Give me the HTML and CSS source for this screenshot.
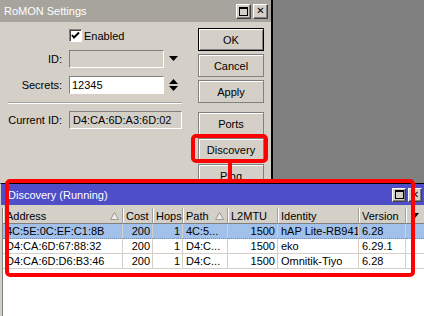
FILE: index.html
```html
<!doctype html>
<html lang="en">
<head>
    <meta charset="UTF-8">
    <title>RoMON Settings</title>
    <link rel="stylesheet" href="styles.css">
</head>
<body>
<div class="screen">
    <div class="top">
        <div class="settings">
            <div class="titlebar inactive">
                <span class="title">RoMON Settings</span>
                <span class="tbtns">
                    <span class="tbtn"><span class="maxi"></span></span>
                    <span class="tbtn close">&#x2715;</span>
                </span>
            </div>
            <div class="sbody">
                <div class="form">
                    <div class="row check-row">
                        <span class="checkbox">
                            <svg width="11" height="11" viewBox="0 0 11 11"><path d="M2 5 L4 7.5 L9 2.5" fill="none" stroke="#000" stroke-width="2"/></svg>
                        </span>
                        <span class="check-label">Enabled</span>
                    </div>
                    <div class="row">
                        <span class="label">ID:</span>
                        <span class="field disabled"></span>
                        <svg class="arrow" width="9" height="6" viewBox="0 0 9 6"><polygon points="0,0 9,0 4.5,5" fill="#000"/></svg>
                    </div>
                    <div class="row">
                        <span class="label">Secrets:</span>
                        <span class="field white">12345</span>
                        <svg class="arrow" width="9" height="12" viewBox="0 0 9 12"><polygon points="4.5,0 9,5 0,5" fill="#000"/><polygon points="0,7 9,7 4.5,12" fill="#000"/></svg>
                    </div>
                    <div class="sep"></div>
                    <div class="row">
                        <span class="label">Current ID:</span>
                        <span class="field disabled wide">D4:CA:6D:A3:6D:02</span>
                    </div>
                </div>
                <div class="buttons">
                    <div class="btn default">OK</div>
                    <div class="btn">Cancel</div>
                    <div class="btn">Apply</div>
                    <div class="btn gap">Ports</div>
                    <div class="btn">Discovery</div>
                    <div class="btn">Ping</div>
                </div>
            </div>
        </div>
        <div class="desktop"></div>
    </div>

    <div class="discovery">
        <div class="titlebar active">
            <span class="title">Discovery (Running)</span>
            <span class="tbtns">
                <span class="tbtn small"><span class="maxi"></span></span>
                <span class="tbtn small close">&#x2715;</span>
            </span>
        </div>
        <div class="dbody">
            <div class="table">
                <div class="th">Address <svg class="sort" width="9" height="8" viewBox="0 0 9 8"><polygon points="4.5,0.5 8.5,7.5 0.5,7.5" fill="#ecebe6" stroke="#9a9a9a"/></svg></div>
                <div class="th">Cost</div>
                <div class="th">Hops</div>
                <div class="th">Path <svg class="sort" width="9" height="8" viewBox="0 0 9 8"><polygon points="4.5,0.5 8.5,7.5 0.5,7.5" fill="#ecebe6" stroke="#9a9a9a"/></svg></div>
                <div class="th">L2MTU</div>
                <div class="th">Identity</div>
                <div class="th">Version</div>
                <div class="th last"><svg width="8" height="5" viewBox="0 0 8 5"><polygon points="0,0 8,0 4,5" fill="#000"/></svg></div>

                <div class="td sel">4C:5E:0C:EF:C1:8B</div>
                <div class="td sel num">200</div>
                <div class="td sel num">1</div>
                <div class="td sel">4C:5...</div>
                <div class="td sel num">1500</div>
                <div class="td sel">hAP Lite-RB941</div>
                <div class="td sel">6.28</div>
                <div class="td sel end"></div>

                <div class="td">D4:CA:6D:67:88:32</div>
                <div class="td num">200</div>
                <div class="td num">1</div>
                <div class="td">D4:C...</div>
                <div class="td num">1500</div>
                <div class="td">eko</div>
                <div class="td">6.29.1</div>
                <div class="td end"></div>

                <div class="td">D4:CA:6D:D6:B3:46</div>
                <div class="td num">200</div>
                <div class="td num">1</div>
                <div class="td">D4:C...</div>
                <div class="td num">1500</div>
                <div class="td">Omnitik-Tiyo</div>
                <div class="td">6.28</div>
                <div class="td end"></div>
            </div>
        </div>
    </div>

    <!-- red annotation marks -->
    <div class="mark mark-btn"></div>
    <div class="mark-line"></div>
    <div class="mark mark-table"></div>
</div>
</body>
</html>
```

FILE: styles.css
```css
*{
    margin: 0;
    padding: 0;
    box-sizing: border-box;
}
body{
    font-family: "Liberation Sans", Arial, sans-serif;
    font-size: 11px;
    color: #000;
    background: #808080;
}
.screen{
    position: relative;
    width: 424px;
    height: 316px;
    overflow: hidden;
}
.top{
    display: flex;
    height: 183px;
    overflow: hidden;
}
.settings{
    width: 273px;
    height: 200px;
    background: #d4d0c8;
    border-right: 2px solid #000;
}
.desktop{
    flex: 1;
    background: #808080;
}
.titlebar{
    display: flex;
    align-items: center;
    color: #fff;
}
.titlebar.inactive{
    height: 22px;
    background: #a6a49c;
    padding-left: 4px;
}
.titlebar .title{
    flex: 1;
}
.tbtns{
    display: flex;
    gap: 2px;
    padding-right: 3px;
}
.tbtn{
    width: 15px;
    height: 15px;
    background: #d4d0c8;
    border: 1px solid;
    border-color: #fff #404040 #404040 #fff;
    box-shadow: inset -1px -1px #808080;
    display: flex;
    align-items: center;
    justify-content: center;
    color: #000;
}
.tbtn.small{
    width: 14px;
    height: 14px;
}
.maxi{
    width: 9px;
    height: 9px;
    border: 1px solid #000;
    border-top-width: 2px;
}
.close{
    font-size: 10px;
    font-weight: bold;
    line-height: 1;
    font-family: "DejaVu Sans", sans-serif;
}
.sbody{
    display: flex;
    padding-left: 8px;
}
.form{
    width: 174px;
    padding-top: 7px;
}
.row{
    display: flex;
    align-items: center;
    height: 18px;
    margin-bottom: 8px;
}
.check-row{
    height: 13px;
    margin-bottom: 8px;
    padding-left: 61px;
}
.checkbox{
    width: 13px;
    height: 13px;
    background: #fff;
    border: 1px solid;
    border-color: #808080 #fff #fff #808080;
    box-shadow: inset 1px 1px #404040;
    display: flex;
    align-items: center;
    justify-content: center;
}
.check-label{
    margin-left: 2px;
}
.label{
    width: 54px;
    text-align: right;
    margin-right: 7px;
    white-space: nowrap;
}
.field{
    width: 95px;
    height: 18px;
    border: 1px solid;
    border-color: #808080 #fff #fff #808080;
    padding-left: 2px;
    line-height: 16px;
}
.field.white{
    background: #fff;
}
.field.disabled{
    background: #d4d0c8;
}
.field.wide{
    width: 113px;
    padding-left: 3px;
}
.arrow{
    margin-left: 5px;
}
.sep{
    height: 2px;
    border-top: 1px solid #a0a0a0;
    border-bottom: 1px solid #fff;
    margin-bottom: 7px;
}
.buttons{
    margin-left: 16px;
    padding-top: 6px;
    display: flex;
    flex-direction: column;
    gap: 3px;
}
.btn{
    width: 66px;
    height: 23px;
    border: 1px solid #808080;
    box-shadow: inset 1px 1px #fff;
    display: flex;
    align-items: center;
    justify-content: center;
}
.btn.default{
    border-color: #000;
    box-shadow: inset 1px 1px #fff, inset -1px -1px #808080;
}
.btn.gap{
    margin-top: 6px;
}
.discovery{
    height: 133px;
    background: #d4d0c8;
    border-top: 1px solid #000;
    border-left: 1px solid #d4d0c8;
}
.titlebar.active{
    height: 21px;
    background: #4e4ec8;
    padding-left: 7px;
}
.titlebar.active .tbtns{
    padding-right: 2px;
}
.dbody{
    padding: 3px 0 0 1px;
    height: 112px;
}
.table{
    height: 100%;
    background: #fff;
    border-left: 1px solid #808080;
    display: grid;
    grid-template-columns: 120px 30px 30px 45px 50px 81px 47px 1fr;
    grid-auto-rows: 15px;
    grid-template-rows: 16px;
    align-content: start;
}
.th{
    background: #d4d0c8;
    border-right: 1px solid #a0a0a0;
    border-bottom: 1px solid #808080;
    box-shadow: inset 1px 0 #fff;
    padding: 0 3px;
    display: flex;
    align-items: center;
    white-space: nowrap;
}
.th .sort{
    margin-left: auto;
}
.th.last{
    border-right: none;
    justify-content: center;
}
.td{
    border-right: 1px solid #d4d0c8;
    border-bottom: 1px solid #d4d0c8;
    padding: 0 3px;
    line-height: 14px;
    white-space: nowrap;
    overflow: hidden;
}
.td.num{
    text-align: right;
    padding-right: 2px;
}
.td.sel{
    background: #a2c1ea;
    border-bottom: 1px dotted #6f8fb8;
}
.td.end{
    border-right: none;
}
.mark{
    position: absolute;
    border: 4px solid #f00;
    border-radius: 5px;
}
.mark-btn{
    left: 191px;
    top: 134px;
    width: 77px;
    height: 29px;
}
.mark-line{
    position: absolute;
    left: 228px;
    top: 162px;
    width: 4px;
    height: 19px;
    background: #f00;
}
.mark-table{
    left: 5px;
    top: 179px;
    width: 410px;
    height: 98px;
}
```
